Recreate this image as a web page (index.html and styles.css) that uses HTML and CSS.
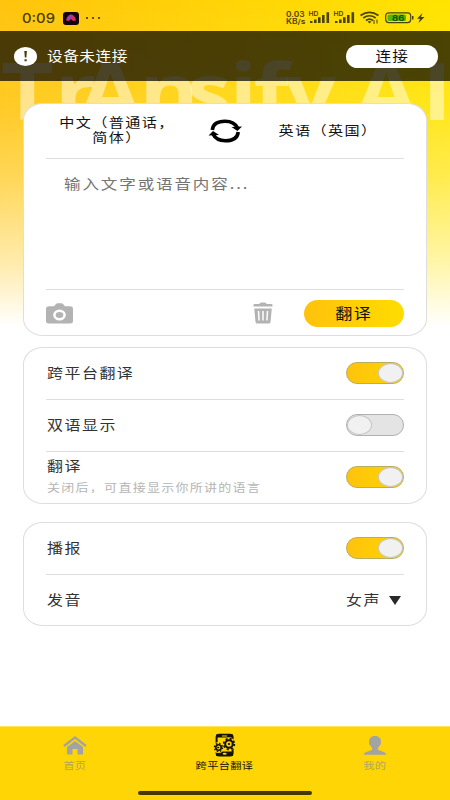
FILE: index.html
```html
<!DOCTYPE html>
<html lang="zh-CN">
<head>
<meta charset="utf-8">
<title>TrAnsify AI</title>
<link rel="stylesheet" href="styles.css">
</head>
<body>
<div class="screen">
  <svg class="brand" viewBox="0 0 450 80"><text transform="scale(1.15 1)" x=".9 47.700 68.600 121.2 162 199.500 220.400 247.7 296 308.4 367" y="62.500">TrAnsify AI</text></svg>
  <header class="status">
    <span class="clock">0:09</span>
    <svg class="app" viewBox="0 0 16 13"><rect width="16" height="13" rx="3" fill="#110610"/><path d="M3 8.5Q4 2.8 8 2.5Q12 2.8 13 8.5L10 9L8 7L6 9Z" fill="#d92b58"/><path d="M4 6L8 2.5L8 6L5 8Z" fill="#734fc5"/></svg>
    <span class="dots"><i></i><i></i><i></i></span>
    <svg class="indicators" viewBox="0 0 142 18">
      <g fill="#4b4300" font-family="Inter, sans-serif" font-weight="600">
        <text x="0" y="7" font-size="7.300" textLength="18.500" lengthAdjust="spacingAndGlyphs">0.03</text>
        <text x="0" y="14" font-size="7" textLength="19.5" lengthAdjust="spacingAndGlyphs">KB/s</text>
        <text x="22.5" y="5.500" font-size="6" textLength="10" lengthAdjust="spacingAndGlyphs">HD</text>
        <text x="47.5" y="5.500" font-size="6" textLength="10" lengthAdjust="spacingAndGlyphs">HD</text>
        <path d="M24 11h2.5v2H24zM28 9.5h2.6V13H28zM32 7.3h2.6V13H32zM36 5h2.6V13H36zM40.500 2.300h2.600v10.700h-2.600zM49 11h2.500v2H49zM53 9.500h2.600V13H53zM57 7.300h2.600V13H57zM61 5h2.600V13H61zM65.500 2.300h2.600v10.700h-2.600z"/>
      </g>
      <g fill="none" stroke="#4b4300" stroke-width="1.7"><path d="M74.500 5.500Q83.500-.8 92.500 5.500M77.300 8Q83.500 3.500 89.700 8M80 10.500Q83.500 7.600 87 10.500"/></g>
      <path d="M81.500 11.500q2-1.200 4 0l-2 2zM87.500 10h1v4h-1zM90.500 9.500h1v4h-1z" fill="#4b4300"/>
      <rect x="99.700" y="2.800" width="25" height="9.800" rx="3" fill="#ffe000" stroke="#4b4300" stroke-width="1.200"/>
      <rect x="101.500" y="4.500" width="18.500" height="6.400" rx="1.500" fill="#52b80b"/><path d="M126 6h1.500v3.500H126z" fill="#4b4300"/>
      <text x="106" y="10.600" font-family="Inter, sans-serif" font-size="7.800" font-weight="600" fill="#1e4200" textLength="12.500" lengthAdjust="spacingAndGlyphs">86</text>
      <path d="M136.500 3L131 8.700h3L132.500 13l6-6H135z" fill="#4b4300"/>
    </svg>
  </header>
  <div class="banner">
    <svg class="alert" viewBox="0 0 23 19"><ellipse cx="11.500" cy="9.500" rx="11.500" ry="9.500" fill="#fff"/><path d="M10.300 4h2.600l-.5 6.500h-1.600zM10.500 12.200h2.200v2h-2.200z" fill="#4b3b09"/></svg>
    <span class="t">设备未连接</span>
    <button class="connect"><span class="t">连接</span></button>
  </div>
  <main>
    <section class="card translator">
      <div class="languages">
        <div class="source"><span class="t">中文（普通话，</span><span class="t">简体）</span></div>
        <svg class="swap" viewBox="0 0 34 26"><g fill="none" stroke="#000" stroke-width="3.600"><path d="M4.300 12C5 5.500 11 3.300 17 3.300C23 3.300 27.500 5.800 29.500 10M30.200 14C29.500 20.500 23.500 22.700 17.500 22.700C11.500 22.700 7 20.200 5 16"/></g><path d="M23.500 9L34 8.500L29.500 13ZM11 17L.5 17.500L5 13Z"/></svg>
        <div class="target"><span class="t">英语（英国）</span></div>
      </div>
      <div class="entry"><span class="t">输入文字或语音内容...</span></div>
      <div class="tools">
        <svg class="camera" viewBox="0 0 27 21"><path d="M3 3.300H8L10 1Q10.500.300 11.500.300H15.500Q16.500.300 17 1L19 3.300H24Q27 3.300 27 6V18Q27 20.500 24 20.500H3Q0 20.500 0 18V6Q0 3.300 3 3.300Z" fill="#b3b3b3"/><ellipse cx="13.500" cy="12" rx="5.100" ry="4.300" fill="#b3b3b3" stroke="#fff" stroke-width="2.500"/></svg>
        <svg class="trash" viewBox="0 0 20 22"><path d="M1.500 2H6L8 .5H12L14 2H18.500Q19.500 2 19.500 3V4.500H.5V3Q.5 2 1.500 2ZM1.200 6.500H18.800L17.500 20Q17.300 21.500 15.500 21.500H4.500Q2.700 21.500 2.500 20Z" fill="#b3b3b3"/><path d="M5.500 9L6.100 18.500M10 9V18.500M14.500 9L13.900 18.500" stroke="#fff" stroke-width="1.500"/></svg>
        <button class="go"><span class="t">翻译</span></button>
      </div>
    </section>
    <section class="card settings">
      <div class="row"><span class="t">跨平台翻译</span><span class="switch on"></span></div>
      <div class="row"><span class="t">双语显示</span><span class="switch"></span></div>
      <div class="row"><div class="labels"><span class="t">翻译</span><span class="t hint">关闭后，可直接显示你所讲的语言</span></div><span class="switch on"></span></div>
    </section>
    <section class="card voice">
      <div class="row"><span class="t">播报</span><span class="switch on"></span></div>
      <div class="row"><span class="t">发音</span><div class="select"><span class="t">女声</span><svg viewBox="0 0 12 9"><path d="M0 0H12L6 9Z" fill="#292929"/></svg></div></div>
    </section>
  </main>
  <nav>
    <a><svg viewBox="0 0 24 24"><path d="M1 13L12 4.500L23 13" fill="none" stroke="#a3a3a3" stroke-width="2.400"/><path d="M12 8L20 14V21.500H14.500V16H9.500V21.500H4V14Z" fill="#a3a3a3"/></svg><span class="t">首页</span></a>
    <a class="active"><svg viewBox="0 0 24 24"><rect x="3.600" y="1.800" width="16" height="20.800" rx="2.500" fill="#ffd506" stroke="#171300" stroke-width="2"/><path d="M3 1.500H20V4.500H3ZM3 18.500H20V23H3Z" fill="#171300"/><path d="M9 3H14" stroke="#ffd506"/><ellipse cx="11.700" cy="20.700" rx="2" ry="1" fill="#ffd506"/><g fill="none" stroke="#ffd506"><circle cx="16" cy="11" r="4.500" stroke-width="4"/><circle cx="5.500" cy="14.500" r="3.500" stroke-width="4"/></g><g fill="none" stroke="#171300"><circle cx="16" cy="11" r="3.800" stroke-width="2"/><circle cx="16" cy="11" r="5.300" stroke-width="1.800" stroke-dasharray="2.080 2.080"/><circle cx="5.500" cy="14.500" r="2.700" stroke-width="1.600"/><circle cx="5.500" cy="14.500" r="4" stroke-width="1.400" stroke-dasharray="1.570 1.570"/></g><circle cx="16" cy="11" r="1.100"/><circle cx="5.500" cy="14.500" r=".8"/></svg><span class="t">跨平台翻译</span></a>
    <a><svg viewBox="0 0 24 24"><path d="M12 3C8 3 6 5.500 6 9C6 12 8 13 9 15C10 17 7.500 17.500 4.500 18.500Q1 19.500.5 21.800H23.500Q23 19.500 19.500 18.500C16.500 17.500 14 17 15 15C16 13 18 12 18 9C18 5.500 16 3 12 3Z" fill="#a3a3a3"/></svg><span class="t">我的</span></a>
    <div class="home-bar"></div>
  </nav>
</div>
</body>
</html>
```

FILE: styles.css
```css
*, *::before { box-sizing: border-box; }
body { margin: 0; font-family: "Noto Sans CJK SC", sans-serif; color: #333; }
button { border: 0; padding: 0; font: inherit; color: #111; }
svg { display: block; flex: none; }
.screen {
  position: relative; width: 450px; height: 800px; overflow: hidden;
  display: flex; flex-direction: column;
  background:
    linear-gradient(to bottom, rgba(255,255,255,0) 0, rgba(255,255,255,.1) 105px, rgba(255,255,255,.3) 175px, rgba(255,255,255,.67) 265px, #fff 327px),
    linear-gradient(to right, #ffc40d, #ffe400);
}
.t { display: inline-block; transform: scaleX(1.18); transform-origin: left center; white-space: nowrap; font-size: 13.5px; line-height: 18px; letter-spacing: 1.3px; }
.brand { position: absolute; left: 0; top: 57px; width: 450px; height: 80px; }
.brand text { font: 700 79px "Open Sans", sans-serif; fill: #fff; fill-opacity: .48; }
.status { position: relative; height: 31px; flex: none; display: flex; align-items: center; padding: 5px 23px 0 22px; color: #4b3b00; }
.clock { font: 500 13px/18px Inter, sans-serif; width: 41px; transform: scaleX(1.14); transform-origin: left; }
.app { width: 16px; height: 13px; }
.dots { display: flex; gap: 4px; margin-left: 7px; }
.dots i { width: 2px; height: 2px; background: #66500a; }
.indicators { width: 142px; height: 18px; margin-left: auto; margin-top: 2px; transform: translateX(1px); }
.banner { position: relative; flex: none; height: 50px; background: rgba(0,0,0,.71); display: flex; align-items: center; padding: 0 12px 0 14px; color: #fff; }
.banner .t { font-size: 13.300px; letter-spacing: .4px; margin-bottom: 1px; }
.alert { width: 23px; height: 19px; margin-right: 10px; }
.connect { width: 92px; height: 23px; margin-left: auto; border-radius: 12px; background: #fff; display: flex; align-items: center; justify-content: center; }
.connect .t, .go .t { transform-origin: center; }
.banner .connect .t { letter-spacing: 1px; margin-bottom: 1px; }
main { position: relative; flex: 1; padding: 22px 23px 0; display: flex; flex-direction: column; }
.card { background: #fff; border: 1px solid #dedede; border-radius: 20px / 17px; padding: 0 22px; flex: none; }
.translator { height: 233px; margin-bottom: 11px; }
.languages { height: 55px; display: grid; grid-template-columns: 143px 72px 143px; align-items: center; border-bottom: 1px solid #dedede; color: #111; text-align: center; }
.source { display: flex; flex-direction: column; align-items: center; padding: 0 2px 3px 0; }
.languages .t { transform-origin: center; font-size: 12.800px; line-height: 14.500px; letter-spacing: 1.2px; }
.target { padding: 0 9px 6px 0; }
.swap { width: 34px; height: 26px; justify-self: center; }
.entry { height: 131px; padding: 11px 18px; border-bottom: 1px solid #dedede; color: #747474; }
.entry .t { font-size: 14px; letter-spacing: 1.600px; }
.tools { height: 46px; display: flex; align-items: center; }
.camera { width: 27px; height: 21px; }
.trash { width: 20px; height: 22px; margin-left: auto; }
.go { width: 100px; height: 27px; margin-left: 31px; border-radius: 14px; background: linear-gradient(to right, #ffc20d, #ffdc00); display: flex; align-items: center; justify-content: center; }
.go .t { font-size: 14.500px; margin-bottom: 1px; }
.settings { height: 157px; margin-bottom: 18px; }
.voice { height: 104px; }
.row { height: 52px; display: flex; align-items: center; justify-content: space-between; border-bottom: 1px solid #dedede; padding: 0 0 1px 1px; }
.row:last-child { border-bottom: 0; padding-bottom: 2px; }
.row > .t, .select .t { margin-bottom: 2px; }
.labels { display: flex; flex-direction: column; gap: 4px; padding-bottom: 2px; }
.row .hint { font-size: 11px; letter-spacing: 1.100px; color: #b5b5b5; }
.switch { width: 58px; height: 22px; border: 1px solid #b0b0b0; border-radius: 12px; background: #e4e4e4; display: flex; }
.switch::before { content: ""; width: 25px; height: 20px; border: 1px solid #c5c5c5; border-radius: 50%; background: #f1f1f1; }
.switch.on { justify-content: flex-end; background: linear-gradient(to right, #ffc20d, #ffd600); border-color: #b9ad60; }
.select { display: flex; align-items: center; width: 58px; justify-content: space-between; padding-right: 3px; }
.select svg { width: 12px; height: 9px; }
nav { position: relative; height: 74px; flex: none; background: #ffd506; border-top: 1px solid #ffe45a; display: grid; grid-template-columns: repeat(3, 150px); align-items: start; }
nav a { display: flex; flex-direction: column; align-items: center; padding-top: 6px; color: #b3a55b; }
nav a svg { width: 24px; height: 24px; }
nav .t { font-size: 9.500px; line-height: 17px; letter-spacing: .3px; transform-origin: center; }
nav .active { color: #171300; }
.home-bar { position: absolute; left: 138px; bottom: 5px; width: 174px; height: 4px; border-radius: 2px; background: #443900; }
```
